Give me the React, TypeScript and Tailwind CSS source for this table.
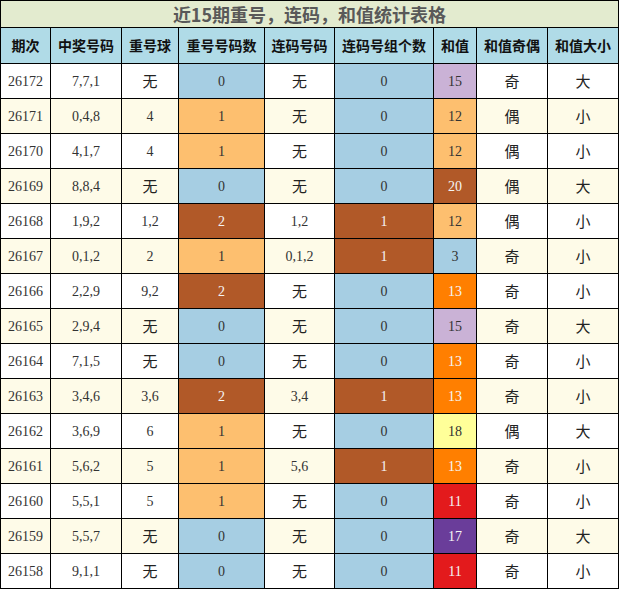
import React from 'react';

type Tone = 'blue' | 'lorange' | 'brown' | 'lilac' | 'orange' | 'yellow' | 'red' | 'purple';

const toneCls: Record<Tone, string> = {
  blue: 'bg-[#a6cee3] text-[#333]',
  lorange: 'bg-[#fdbf6f] text-[#333]',
  brown: 'bg-[#b15928] text-[#f5f5f5]',
  lilac: 'bg-[#cab2d6] text-[#333]',
  orange: 'bg-[#ff7f00] text-[#f5f5f5]',
  yellow: 'bg-[#ffff99] text-[#333]',
  red: 'bg-[#e31a1c] text-[#f5f5f5]',
  purple: 'bg-[#6a3d9a] text-[#f5f5f5]',
};

const repTone: Record<string, Tone> = { '0': 'blue', '1': 'lorange', '2': 'brown' };
const linkTone: Record<string, Tone> = { '0': 'blue', '1': 'brown' };

// issue, numbers, repeat balls, repeat count, link nums, link groups, sum, sum tone, odd/even, big/small
const rows: [string, string, string, string, string, string, string, Tone, string, string][] = [
  ['26172', '7,7,1', '无', '0', '无', '0', '15', 'lilac', '奇', '大'],
  ['26171', '0,4,8', '4', '1', '无', '0', '12', 'lorange', '偶', '小'],
  ['26170', '4,1,7', '4', '1', '无', '0', '12', 'lorange', '偶', '小'],
  ['26169', '8,8,4', '无', '0', '无', '0', '20', 'brown', '偶', '大'],
  ['26168', '1,9,2', '1,2', '2', '1,2', '1', '12', 'lorange', '偶', '小'],
  ['26167', '0,1,2', '2', '1', '0,1,2', '1', '3', 'blue', '奇', '小'],
  ['26166', '2,2,9', '9,2', '2', '无', '0', '13', 'orange', '奇', '小'],
  ['26165', '2,9,4', '无', '0', '无', '0', '15', 'lilac', '奇', '大'],
  ['26164', '7,1,5', '无', '0', '无', '0', '13', 'orange', '奇', '小'],
  ['26163', '3,4,6', '3,6', '2', '3,4', '1', '13', 'orange', '奇', '小'],
  ['26162', '3,6,9', '6', '1', '无', '0', '18', 'yellow', '偶', '大'],
  ['26161', '5,6,2', '5', '1', '5,6', '1', '13', 'orange', '奇', '小'],
  ['26160', '5,5,1', '5', '1', '无', '0', '11', 'red', '奇', '小'],
  ['26159', '5,5,7', '无', '0', '无', '0', '17', 'purple', '奇', '大'],
  ['26158', '9,1,1', '无', '0', '无', '0', '11', 'red', '奇', '小'],
];

const heads = ['期次', '中奖号码', '重号球', '重号号码数', '连码号码', '连码号组个数', '和值', '和值奇偶', '和值大小'];

const serif = "font-['Liberation_Serif','Noto_Sans_CJK_SC',serif] text-[14px] text-[#333]";
const cjk = "font-['Noto_Sans_CJK_SC',sans-serif] text-[15px] text-[#222]";

const Cell: React.FC<{ text: string; className?: string }> = ({ text, className = '' }) => {
  const isCjk = /[\u4e00-\u9fff]/.test(text);
  return (
    <div className={`flex items-center justify-center border-r border-b border-black ${isCjk ? cjk : serif} ${className}`}>
      {text}
    </div>
  );
};

export default function App() {
  return (
    <div className="w-[619px] h-[589px] bg-white">
      <div className="border-l border-t border-black">
        <div className="h-[27px] flex items-center justify-center border-r border-b border-black bg-[#e3ebcf] text-[#595959] font-bold text-[18px] font-['Noto_Sans_CJK_SC',sans-serif]">
          近15期重号，连码，和值统计表格
        </div>
        <div className="grid grid-cols-[50px_71px_57px_86px_70px_99px_43px_71px_71px]">
          {heads.map((h) => (
            <div
              key={h}
              className="h-[36px] flex items-center justify-center border-r border-b border-black bg-[#b0dbe7] font-bold text-[14px] text-[#111] font-['Noto_Sans_CJK_SC',sans-serif]"
            >
              {h}
            </div>
          ))}
          {rows.map((r, i) => {
            const bg = i % 2 === 1 ? 'bg-[#fefbe8]' : 'bg-white';
            return (
              <React.Fragment key={r[0]}>
                <Cell text={r[0]} className={`h-[35px] ${bg}`} />
                <Cell text={r[1]} className={bg} />
                <Cell text={r[2]} className={bg} />
                <Cell text={r[3]} className={`${toneCls[repTone[r[3]]]}`} />
                <Cell text={r[4]} className={bg} />
                <Cell text={r[5]} className={`${toneCls[linkTone[r[5]]]}`} />
                <Cell text={r[6]} className={`${toneCls[r[7]]}`} />
                <Cell text={r[8]} className={bg} />
                <Cell text={r[9]} className={bg} />
              </React.Fragment>
            );
          })}
        </div>
      </div>
    </div>
  );
}
